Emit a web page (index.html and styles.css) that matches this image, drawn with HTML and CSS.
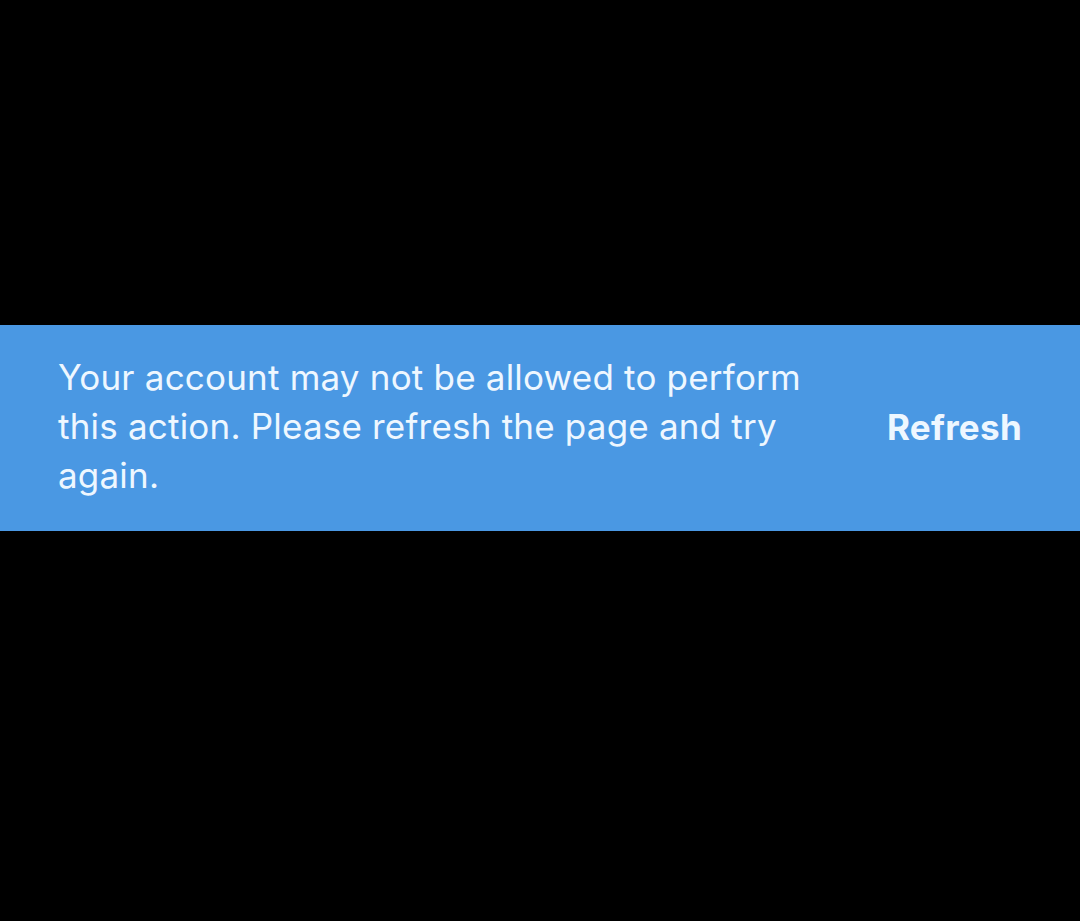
FILE: index.html
```html
<!DOCTYPE html>
<html lang="en">
<head>
  <meta charset="UTF-8">
  <meta name="viewport" content="width=device-width, initial-scale=1.0">
  <title>Notice</title>
  <link rel="stylesheet" href="styles.css">
</head>
<body>
  <div class="toast">
    <p class="toast-text">Your account may not be allowed to perform this action. Please refresh the page and try again.</p>
    <button class="toast-action">Refresh</button>
  </div>
</body>
</html>
```

FILE: styles.css
```css
* {
  margin: 0;
  padding: 0;
  box-sizing: border-box;
}

body {
  background: #000;
  min-height: 100vh;
  padding-top: 325px;
  font-family: Inter, "Open Sans", sans-serif;
}

.toast {
  background: #4a98e3;
  color: #eef7ff;
  display: flex;
  align-items: center;
  padding: 28px 58px 31px 58px;
}

.toast-text {
  width: 770px;
  font-size: 35px;
  line-height: 49px;
  letter-spacing: 0.2px;
}

.toast-action {
  margin-left: auto;
  background: none;
  border: none;
  color: #eef7ff;
  font-family: inherit;
  font-size: 35px;
  font-weight: 700;
  letter-spacing: 0.3px;
  cursor: pointer;
}
```
